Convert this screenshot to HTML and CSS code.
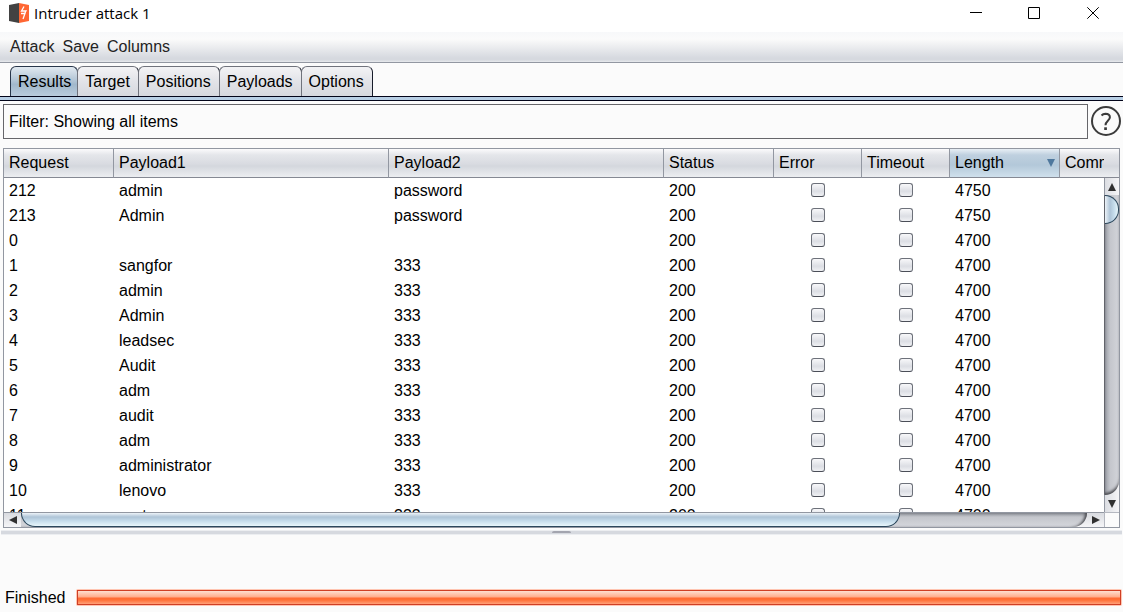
FILE: index.html
```html
<!DOCTYPE html>
<html lang="en">
<head>
<meta charset="utf-8">
<title>Intruder attack 1</title>
<link rel="stylesheet" href="styles.css">
</head>
<body>
<div class="window">
  <header class="titlebar">
    <svg class="logo" viewBox="0 0 20 20" aria-hidden="true">
      <path d="M0 2 10 0v20L0 18z" fill="#424242"/>
      <path d="M10 0l10 2v16l-10 2z" fill="#ff6633"/>
      <path d="M15 3.500l-2.500 4.500h4.500l-2 3.500M12 10.500h4l-2 5.500" fill="none" stroke="#fff" stroke-width="1.300"/>
    </svg>
    <h1 class="title">Intruder attack 1</h1>
    <div class="controls">
      <button class="control" type="button" aria-label="Minimize"><svg viewBox="0 0 12 12"><path d="M0 5.500h12"/></svg></button>
      <button class="control" type="button" aria-label="Maximize"><svg viewBox="0 0 12 12"><path d="M.5.5h11v11H.5z"/></svg></button>
      <button class="control" type="button" aria-label="Close"><svg viewBox="0 0 12 12"><path d="M.3.300l11.400 11.400M11.700.3.300 11.700"/></svg></button>
    </div>
  </header>
  <nav class="menubar">
    <button class="menu" type="button">Attack</button>
    <button class="menu" type="button">Save</button>
    <button class="menu" type="button">Columns</button>
  </nav>
  <div class="tabs" role="tablist">
    <button class="tab tab-active" type="button" role="tab" aria-selected="true">Results</button>
    <button class="tab" type="button" role="tab">Target</button>
    <button class="tab" type="button" role="tab">Positions</button>
    <button class="tab" type="button" role="tab">Payloads</button>
    <button class="tab" type="button" role="tab">Options</button>
  </div>
  <div class="tab-line"></div>
  <div class="filter-row">
    <button class="filter" type="button">Filter: Showing all items</button>
    <button class="help" type="button" aria-label="Help">
      <svg viewBox="0 0 30 30"><circle cx="15" cy="15" r="14"/><path d="M10.500 9.500q1.500-1.500 4-1.700c2.800 0 4.400 1.300 4.400 3.500 0 3.400-4.400 3.800-4.400 8"/><path class="dot" d="M13.200 21.300h2.700v2.700h-2.700z"/></svg>
    </button>
  </div>
  <main class="pane">
    <div class="viewport">
      <table class="results">
        <colgroup><col class="c-id"><col class="c-payload"><col class="c-payload"><col class="c-id"><col class="c-flag"><col class="c-flag"><col class="c-id"><col></colgroup>
        <thead><tr><th>Request</th><th>Payload1</th><th>Payload2</th><th>Status</th><th>Error</th><th>Timeout</th><th class="sorted"><div class="sort-head">Length<svg viewBox="0 0 8 8" aria-hidden="true"><path d="M0 0h8L4 8z"/></svg></div></th><th>Comment</th></tr></thead>
        <tbody id="rows"></tbody>
      </table>
    </div>
    <div class="side">
      <div class="head-fill"></div>
      <div class="vscroll">
        <button class="arrow arrow-up" type="button" aria-label="Scroll up"><svg viewBox="0 0 8 8"><path d="M4 0l4 8H0z"/></svg></button>
        <div class="vtrack"><div class="vthumb"></div></div>
        <button class="arrow arrow-down" type="button" aria-label="Scroll down"><svg viewBox="0 0 8 8"><path d="M0 0h8L4 8z"/></svg></button>
      </div>
    </div>
    <div class="hscroll">
      <button class="arrow arrow-left" type="button" aria-label="Scroll left"><svg viewBox="0 0 8 8"><path d="M0 4l8-4v8z"/></svg></button>
      <div class="htrack"><div class="hthumb"></div></div>
      <button class="arrow arrow-right" type="button" aria-label="Scroll right"><svg viewBox="0 0 8 8"><path d="M0 0l8 4-8 4z"/></svg></button>
    </div>
    <div class="corner"></div>
  </main>
  <div class="splitter"><span class="grip"></span></div>
  <footer class="status">
    <span class="status-text">Finished</span>
    <div class="progress" role="progressbar" aria-label="Finished" aria-valuenow="100"><div class="progress-fill"></div></div>
  </footer>
</div>
<script src="script.js"></script>
</body>
</html>
```
FILE: styles.css
```css
* { box-sizing: border-box; }
body {
  margin: 0;
  background: #fbfbfb;
  color: #000;
  font: 16px/20px "Liberation Sans", Arial, sans-serif;
}
button {
  margin: 0;
  padding: 0;
  border: 0;
  background: none;
  color: inherit;
  font: inherit;
}
svg { display: block; }
.window { display: flex; flex-direction: column; height: 100vh; overflow: hidden; }

.titlebar { display: flex; flex: none; align-items: flex-start; height: 32px; padding-left: 9px; background: #fff; }
.logo { width: 20px; height: 20px; margin-top: 3px; }
.title { margin: 3px 0 0 5px; font: 15px/20px "Open Sans", "Noto Sans", sans-serif; }
.controls { display: flex; margin-left: auto; }
.control { display: grid; place-items: center; width: 58px; height: 26px; }
.control:last-child { width: 60px; }
.control svg { width: 12px; height: 12px; fill: none; stroke: #000; }

.menubar {
  display: flex;
  flex: none;
  gap: 8px;
  height: 31px;
  padding: 0 10px;
  border-bottom: 1px solid #9297a1;
  background: linear-gradient(#f7f8fa 0, #fbfbfb 7px, #d6d9df 26px, #d6d9df 28px, #e8eaee 30px);
}
.menu { color: #232323; }

.tabs { display: flex; flex: none; height: 33px; padding: 3px 10px 0; }
.tab {
  height: 30px;
  margin-right: -1px;
  padding: 0 8px 0 7px;
  border: 1px solid #70737c;
  border-right-color: #181c2a;
  border-bottom: 0;
  border-radius: 6px 6px 0 0;
  background: linear-gradient(#f3f3f5, #e2e3e8 50%, #d6d8de);
}
.tab-active {
  padding-right: 6px;
  border-color: #28364a;
  background: linear-gradient(#e1e9f0, #b4c6d6 45%, #a2b8cb 60%, #b9cbdc);
}
.tab-line { flex: none; height: 5px; border: solid #020419; border-width: 1px 0; background: #b8cfe5; }

.filter-row { display: flex; flex: none; align-items: flex-start; gap: 3px; height: 38px; padding: 3px 2px 0 3px; }
.filter { flex: 1; height: 35px; padding: 0 5px; border: 1px solid #66666a; background: #fbfbfb; text-align: left; }
.help { padding-top: 2px; }
.help svg { width: 30px; height: 30px; fill: none; stroke: #3b3b3b; stroke-width: 2; }
.help .dot { fill: #3b3b3b; stroke: none; }

.pane {
  display: grid;
  flex: 1;
  grid-template: minmax(0, 1fr) 15px / minmax(0, 1fr) 15px;
  min-height: 0;
  margin: 9px 3px 0;
  border: 1px solid #9297a1;
}
.viewport { overflow: hidden; background: #fff; }
.results { width: 100%; table-layout: fixed; border-spacing: 0; }
.c-id { width: 110px; }
.c-payload { width: 275px; }
.c-flag { width: 88px; }
.results th, .results td { height: 25px; padding: 0 5px; overflow: hidden; text-align: left; white-space: nowrap; }
.results th, .head-fill {
  height: 29px;
  border-bottom: 1px solid #858993;
  background: linear-gradient(#fbfbfc 0, #e4e6ea 6px, #d9dbe1 15px, #d4d7dd 17px, #eceef1 28px);
}
.results th { border-right: 1px solid #9297a1; font-weight: 400; }
.results th:last-child { padding-right: 0; border-right: 0; }
.results th.sorted { background: linear-gradient(#e8eff5 0, #bfd0df 6px, #b3c8d9 16px, #cfe0ec 28px); }
.sort-head { display: flex; align-items: center; justify-content: space-between; }
.sort-head svg { width: 8px; height: 8px; margin-right: -1px; fill: #4f789d; }
.results td.flag { padding-bottom: 1px; }
.check {
  display: block;
  appearance: none;
  width: 14px;
  height: 14px;
  margin: 0 auto;
  border: 1px solid #6d717a;
  border-bottom-color: #4b4e58;
  border-radius: 3px;
  background: linear-gradient(#f8f8fa, #dcdee4 60%, #f0f1f4);
}

.side { display: flex; flex-direction: column; }
.head-fill { flex: none; }
.vscroll { display: flex; flex: 1; flex-direction: column; min-height: 0; background: linear-gradient(90deg, #dadce1, #f5f5f7); }
.arrow { display: grid; flex: none; place-items: center; }
.arrow svg { width: 8px; height: 8px; fill: #303030; }
.arrow-up, .arrow-down { width: 15px; height: 17px; border-left: 1px solid #9297a1; }
.arrow-left, .arrow-right { width: 17px; height: 13px; }
.vtrack {
  flex: 1;
  border-left: 1px solid #62646b;
  border-radius: 0 0 15px 0;
  background: linear-gradient(90deg, #9b9ea6, #c4c6cc 5px, #d3d5da);
  box-shadow: inset 0 -3px 3px -1px #4a4b50;
}
.vthumb {
  height: 29px;
  border: 1px solid #2b475c;
  border-left: 0;
  border-radius: 0 15px 15px 0;
  background: linear-gradient(90deg, #edf3f8, #aec4d7 5px, #c5dceb 9px, #e8f6fb);
}
.hscroll { display: flex; min-width: 0; border-top: 1px solid #9297a1; background: linear-gradient(#d9dbe0, #f5f5f7); }
.htrack {
  flex: 1;
  border-radius: 0 0 15px 0;
  background: linear-gradient(#8d9098, #c4c6cc 4px, #d5d7dc);
  box-shadow: inset -3px 0 3px -1px #4a4b50;
}
.hthumb {
  width: 82.5%;
  height: 14px;
  border: 1px solid #2b475c;
  border-top: 0;
  border-radius: 0 0 15px 15px;
  background: linear-gradient(#edf3f8, #aec4d7 4px, #c5dceb 8px, #e8f6fb);
}
.corner { border: solid #b5b8c0; border-width: 1px 0 0 1px; }

.splitter { display: flex; flex: none; justify-content: center; height: 5px; margin: 2px 1px 0; border: solid #eceef1; border-width: 1px 0; background: #d6d9df; }
.grip { width: 19px; height: 2px; border-radius: 2px 2px 0 0; background: #a3a5af; }
.status { display: flex; flex: none; align-items: flex-end; gap: 11px; height: 77px; padding: 0 1px 4px 5px; }
.progress { flex: 1; padding: 1px; margin-bottom: 2px; border-radius: 2px; background: #ffc5b2; }
.progress-fill {
  height: 15px;
  border: 1px solid #cf3f25;
  background: linear-gradient(#ffded0 0, #ffac8b 6px, #ff6a35 7px, #ff7036 9px, #ffa078 13px);
}
```
FILE: script.js
```javascript
const rows = [
  [212, "admin", "password", 4750], [213, "Admin", "password", 4750],
  [0, "", "", 4700], [1, "sangfor", "333", 4700], [2, "admin", "333", 4700],
  [3, "Admin", "333", 4700], [4, "leadsec", "333", 4700], [5, "Audit", "333", 4700],
  [6, "adm", "333", 4700], [7, "audit", "333", 4700], [8, "adm", "333", 4700],
  [9, "administrator", "333", 4700], [10, "lenovo", "333", 4700], [11, "root", "333", 4700]
];
const flag = (name, id) => `<td class="flag"><input class="check" type="checkbox" aria-label="${name}, request ${id}"></td>`;
document.getElementById("rows").innerHTML = rows.map(([id, first, second, length]) =>
  `<tr><td>${id}</td><td>${first}</td><td>${second}</td><td>200</td>${flag("Error", id)}${flag("Timeout", id)}<td>${length}</td><td></td></tr>`
).join("");
```
